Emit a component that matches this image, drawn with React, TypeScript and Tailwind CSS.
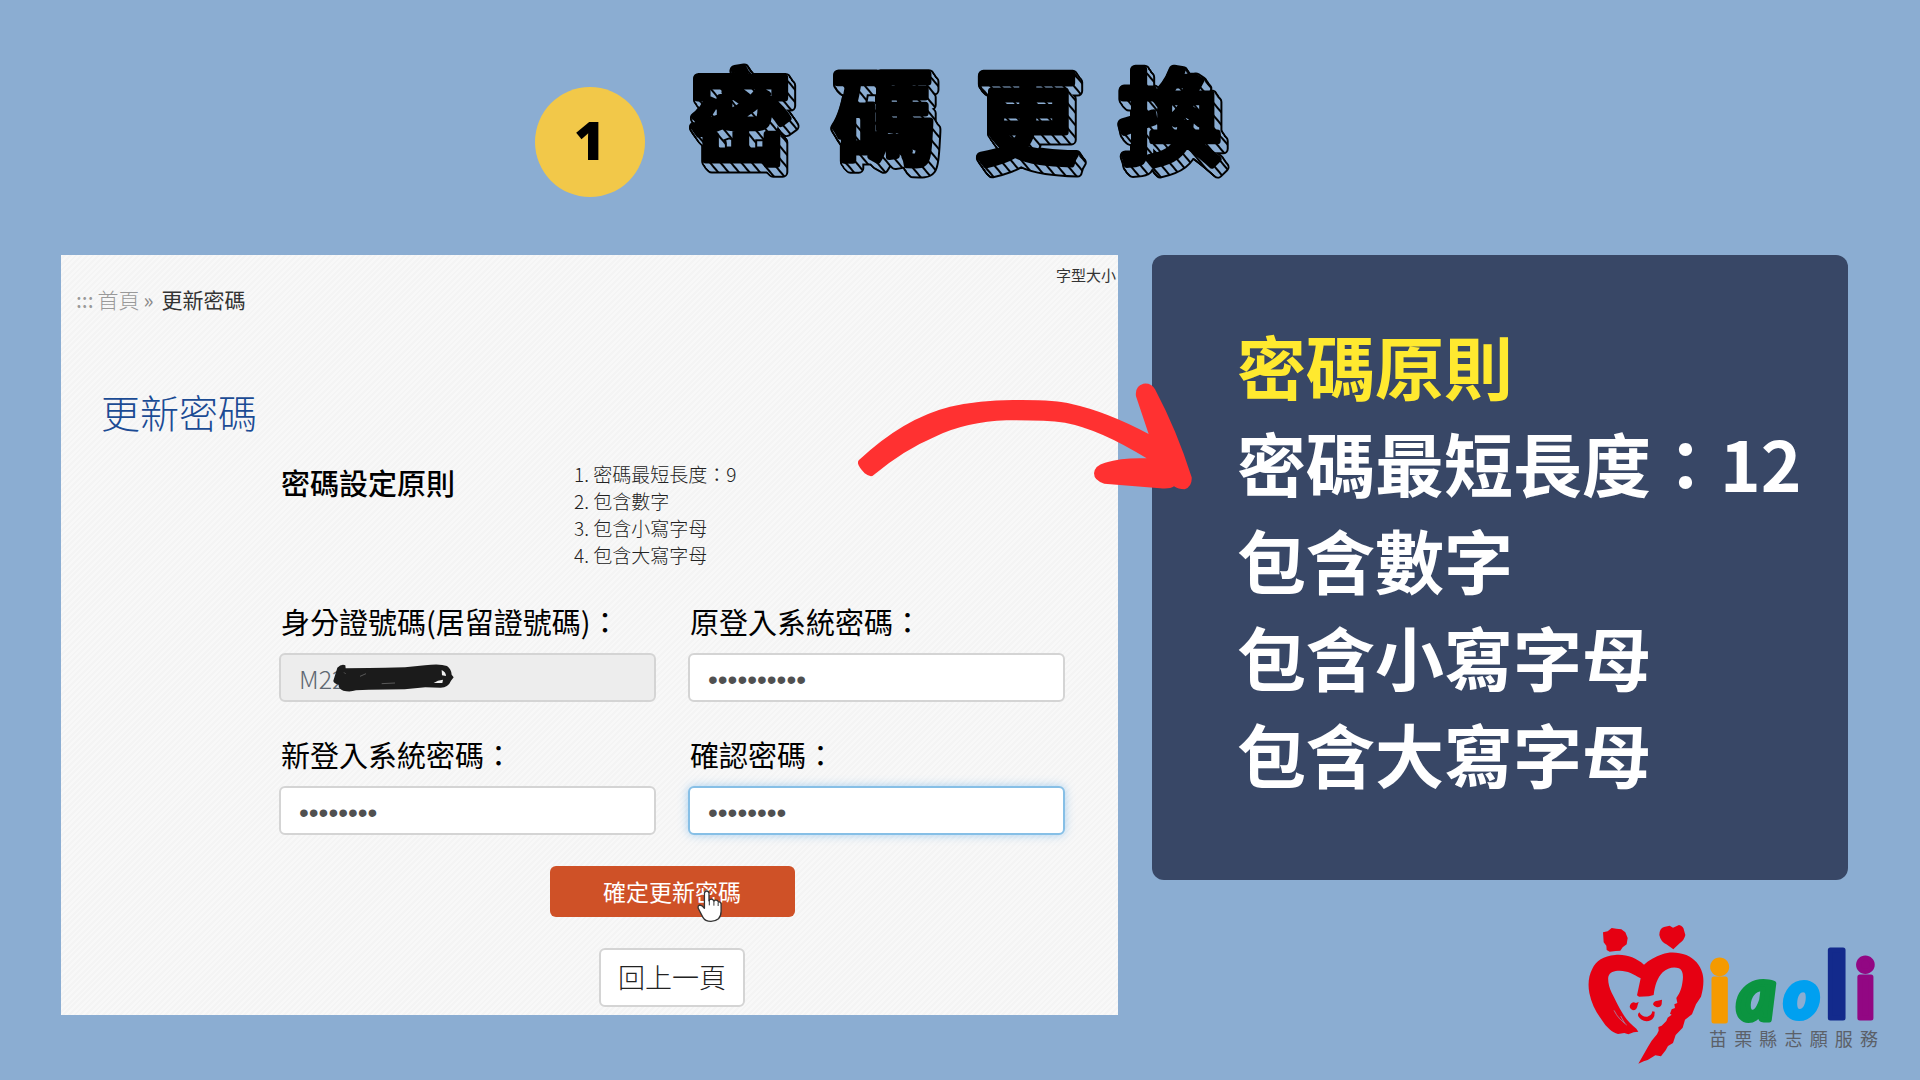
import { useState } from "react";
import { clsx } from "clsx";

// Offsets of the layers that build the slanted side of the title letters
const titleDepth = [
  [1, 1],
  [1, 2],
  [2, 3],
  [3, 4],
  [3, 5],
  [4, 6],
  [5, 7],
  [6, 8],
];

const currentRules = ["密碼最短長度：9", "包含數字", "包含小寫字母", "包含大寫字母"];

const newRules = ["密碼最短長度：12", "包含數字", "包含小寫字母", "包含大寫字母"];

const orgName = ["苗", "栗", "縣", "志", "願", "服", "務"];

interface FieldProps {
  id: string;
  label: string;
  initial: string;
  type?: string;
  readOnly?: boolean;
  highlighted?: boolean;
  children?: React.ReactNode;
}

function Field({ id, label, initial, type = "password", readOnly = false, highlighted = false, children }: FieldProps) {
  const [value, setValue] = useState(initial);

  return (
    <div className="relative flex flex-col">
      <label htmlFor={id} className="mb-[14px] pl-[2px] text-[29px] leading-9 text-black whitespace-nowrap">
        {label}
      </label>
      <input
        id={id}
        type={type}
        value={value}
        readOnly={readOnly}
        autoComplete="off"
        onChange={(e) => setValue(e.target.value)}
        className={clsx(
          "h-[49px] w-full rounded-md border-2 px-[18px] outline-none",
          type === "password" ? "pt-1 font-['Liberation_Sans',sans-serif] text-[28px] text-[#505050]" : "font-light text-[25px] text-[#606872]",
          readOnly ? "bg-[#ededed]" : "bg-white",
          highlighted ? "border-[#86bfe6] shadow-[0_0_10px_rgba(102,175,233,0.55)]" : "border-[#d4d4d4]"
        )}
      />
      {children}
    </div>
  );
}

function TitleArt() {
  return (
    <svg className="h-[130px] w-[560px]" viewBox="0 0 560 130" role="img" aria-label="密碼更換">
      <defs>
        <pattern id="hatch" width="8" height="8" patternUnits="userSpaceOnUse" patternTransform="rotate(-40)">
          <rect width="8" height="8" fill="#8badd2" />
          <rect width="2" height="8" fill="#000" />
        </pattern>
        <text
          id="titleText"
          x="4 147 290 433"
          y="96"
          fontFamily="'Noto Sans CJK TC', sans-serif"
          fontSize="102"
          fontWeight="500"
          strokeLinejoin="round"
        >
          密碼更換
        </text>
      </defs>
      <g fill="#000" stroke="#000" strokeWidth="11">
        {titleDepth.map(([x, y]) => (
          <use key={y} href="#titleText" x={x} y={y} />
        ))}
      </g>
      <g fill="url(#hatch)" stroke="url(#hatch)" strokeWidth="7">
        {titleDepth.map(([x, y]) => (
          <use key={y} href="#titleText" x={x} y={y} />
        ))}
      </g>
      <use href="#titleText" fill="#000" stroke="#000" strokeWidth="7" />
    </svg>
  );
}

// Marker strokes hiding the rest of the ID number
function Scribble() {
  return (
    <svg className="pointer-events-none absolute left-[54px] top-[60px] h-[30px] w-[122px]" viewBox="219 222 366 90" aria-hidden="true">
      <path
        d="M232 236q12-12 24-7l1 9 70-1 48-1 60-1 60-6q44-6 66 2 13 9 14 26l6 8-8 10q-8 20-31 21l-46-1-62 6-108 1-38 2q-18 6-38 1-16-8-14-18-16-4-16-12z"
        fill="#1b1b1b"
      />
      <path d="M545 243q13 6 13 18l-12-2zM521 282q12-9 28-10l-2 10z" fill="#f2f2f2" />
      <path d="M300 262l18-8M365 284l40-2M252 250l5 5" stroke="#777" strokeWidth="2" fill="none" />
    </svg>
  );
}

function HandCursor() {
  return (
    <svg className="pointer-events-none absolute left-[146px] top-[24px] h-8 w-[26px]" viewBox="498 150 78 98" aria-hidden="true">
      <path
        d="M523 160q1-7 7-7t7 7v23q2-5 7-5 6 0 8 6 2-4 7-3 5 0 7 6 6-2 8 5v23q0 15-8 23-9 8-23 8-18 0-25-13l-14-27q-2-9 5-10 7 0 14 10z"
        fill="#fff"
        stroke="#333"
        strokeWidth="4"
        strokeLinejoin="round"
      />
      <path d="M538 181v16M552 184v14M565 188v11" stroke="#333" strokeWidth="3" />
    </svg>
  );
}

function Arrow() {
  return (
    <svg className="pointer-events-none absolute -left-[294px] top-[128px] h-[107px] w-[334px]" viewBox="54 429 1002 321" aria-hidden="true">
      <path
        d="M57 660Q190 535 330 500Q430 477 545 480Q650 480 695 492Q800 515 926 582L888 469Q884 438 910 431Q934 428 945 448Q1010 570 1055 712Q1057 740 1034 748Q1014 748 1002 739Q990 748 960 745L793 731Q762 722 762 700Q764 676 795 668Q850 652 920 655Q780 568 675 548Q610 540 500 541Q380 545 285 590Q190 630 101 705Q92 714 74 700Q51 676 54 665Q55 662 57 660Z"
        fill="#ff3131"
      />
    </svg>
  );
}

function MiaoliLogo() {
  return (
    <div className="relative -mr-[30px] mt-[44px] flex w-[290px] items-end self-end">
      <svg className="h-[141px] w-[117px] shrink-0" viewBox="21 13 351 423" aria-hidden="true">
        <g fill="#e60012">
          <path d="M66 38L80 35L92 25L106 27L121 29L133 38L140 55L137 74L125 83L118 93L104 94L86 96L77 91L76 78L68 68Z" />
          <path d="M235 46Q235 27 249 22L266 18L276 24L294 16Q308 20 309 32L313 46Q310 61 296 71L277 89L256 74Q239 66 235 46Z" />
          <path d="M189 135C164 114 136 103 102 106C68 108 44 125 34 147C23 168 20 192 25 220C31 250 44 277 62 300C77 324 94 338 111 343L130 340L142 344L158 338L172 336L166 327C150 314 136 300 126 283C113 263 102 238 92 219C84 203 80 184 82 171C86 157 99 153 116 153C140 153 158 164 179 176L168 227L174 231L204 230L218 226C221 200 229 174 245 158C260 144 279 140 294 146C306 152 308 169 304 190C301 211 294 224 286 235L289 250L280 254L282 265L272 269L267 282L272 285L260 294L256 304L242 318L232 322L233 333L228 344L212 363L201 381L172 432L188 425L200 421L223 407L240 410L254 392L261 379L276 370L284 346L305 324L312 300L333 284L345 254L360 231C367 207 370 180 364 160C357 136 341 117 316 106C292 97 265 95 244 104C223 111 203 122 189 135Z" />
          <path d="M146 262Q147 250 158 248L165 250L173 247L170 256Q168 272 156 272Q149 271 146 262ZM216 254Q218 243 230 243L243 240L242 254Q239 264 228 263Q219 262 216 254Z" />
          <path d="M175 278Q183 293 199 291Q212 288 214 275L221 276Q222 300 203 304Q181 307 172 290Q169 283 175 278Z" />
        </g>
        <path d="M99 272q14 28 38 44M119 289l12 22" fill="none" stroke="#8badd2" strokeWidth="2" />
      </svg>
      <div className="ml-1 flex flex-1 flex-col pb-[15px]">
        <svg className="h-[80px] w-full overflow-visible" viewBox="0 0 169 80" preserveAspectRatio="xMinYMin" role="img" aria-label="iaoli">
          <g fontFamily="Lato, 'Open Sans', sans-serif" fontWeight="900" strokeWidth="5" strokeLinejoin="round">
            <text x="0" y="75" fontSize="82" fill="#f59a00" stroke="#f59a00">i</text>
            <text x="28" y="74" fontSize="74" fontStyle="italic" fill="#0b9440" stroke="#0b9440">a</text>
            <text x="75" y="72" fontSize="68" fontStyle="italic" fill="#00a0f0" stroke="#00a0f0">o</text>
            <text x="116" y="72" fontSize="92" fill="#132a8c" stroke="#132a8c">l</text>
            <text x="146" y="72" fontSize="80" fill="#920783" stroke="#920783">i</text>
          </g>
        </svg>
        <div className="flex justify-between text-[18px] leading-6 text-[#5b6068]">
          {orgName.map((char) => (
            <span key={char}>{char}</span>
          ))}
        </div>
      </div>
    </div>
  );
}

export default function App() {
  return (
    <div className="min-h-screen overflow-hidden bg-[#8badd2] font-['Noto_Sans_CJK_TC',sans-serif]">
      <header className="flex h-[255px] items-start justify-center gap-[41px] pr-[140px]">
        <div className="mt-[87px] flex size-[110px] items-center justify-center rounded-full bg-[#f2c849] pb-1 font-['Open_Sans',sans-serif] text-[53px] font-extrabold text-black">
          1
        </div>
        <h1 className="mt-[60px]">
          <TitleArt />
        </h1>
      </header>

      <main className="grid grid-cols-[1057fr_696fr] items-start gap-[34px] pr-[72px] pl-[61px]">
        <section className="bg-[repeating-linear-gradient(135deg,#f8f8f8_0px,#f8f8f8_2px,#f4f4f4_2px,#f4f4f4_4px)] pt-[10px] pb-2">
          <p className="pr-[2px] text-right text-[15px] leading-5 text-[#333]">字型大小</p>
          <nav className="flex gap-1 pl-[15px] text-[21px] leading-7">
            <span className="text-[#999]">:::</span>
            <a href="#" className="font-light text-[#999]">首頁</a>
            <span className="mr-1 text-[#888]">»</span>
            <span className="text-[#333]">更新密碼</span>
          </nav>
          <h2 className="mt-[74px] pl-10 text-[39px] leading-[48px] font-light text-[#1b4b94]">更新密碼</h2>

          <form className="mt-[25px] pr-[53px] pl-[218px]" onSubmit={(e) => e.preventDefault()}>
            <div className="flex">
              <h3 className="w-[295px] pt-[6px] pl-[2px] text-[29px] leading-8 font-medium text-black">密碼設定原則</h3>
              <ol className="list-inside list-decimal text-[19px] leading-[27px] font-light text-[#222]">
                {currentRules.map((rule) => (
                  <li key={rule}>{rule}</li>
                ))}
              </ol>
            </div>

            <div className="mt-[35px] grid grid-cols-2 gap-x-8 gap-y-[34px]">
              <Field id="idNumber" label="身分證號碼(居留證號碼)：" initial="M22" type="text" readOnly>
                <Scribble />
              </Field>
              <Field id="oldPassword" label="原登入系統密碼：" initial="aaaaaaaaaa" />
              <Field id="newPassword" label="新登入系統密碼：" initial="aaaaaaaa" />
              <Field id="confirmPassword" label="確認密碼：" initial="aaaaaaaa" highlighted />
            </div>

            <div className="mt-[31px] flex flex-col items-center gap-[31px]">
              <button type="submit" className="relative h-[51px] w-[245px] cursor-pointer rounded-md bg-[#cf5127] text-[23px] text-white">
                確定更新密碼
                <HandCursor />
              </button>
              <button type="button" className="h-[59px] w-[146px] cursor-pointer rounded-md border-2 border-[#d4d4d4] bg-white text-[27px] font-light text-[#222]">
                回上一頁
              </button>
            </div>
          </form>
        </section>

        <div className="flex flex-col">
          <section className="relative rounded-xl bg-[#384766] pt-[62px] pb-[78px] pl-[85px] text-[69px] leading-[97px] font-bold text-white">
            <Arrow />
            <h2 className="text-[#ffe92f]">密碼原則</h2>
            <ul>
              {newRules.map((rule) => (
                <li key={rule} className="whitespace-nowrap">{rule}</li>
              ))}
            </ul>
          </section>
          <MiaoliLogo />
        </div>
      </main>
    </div>
  );
}
